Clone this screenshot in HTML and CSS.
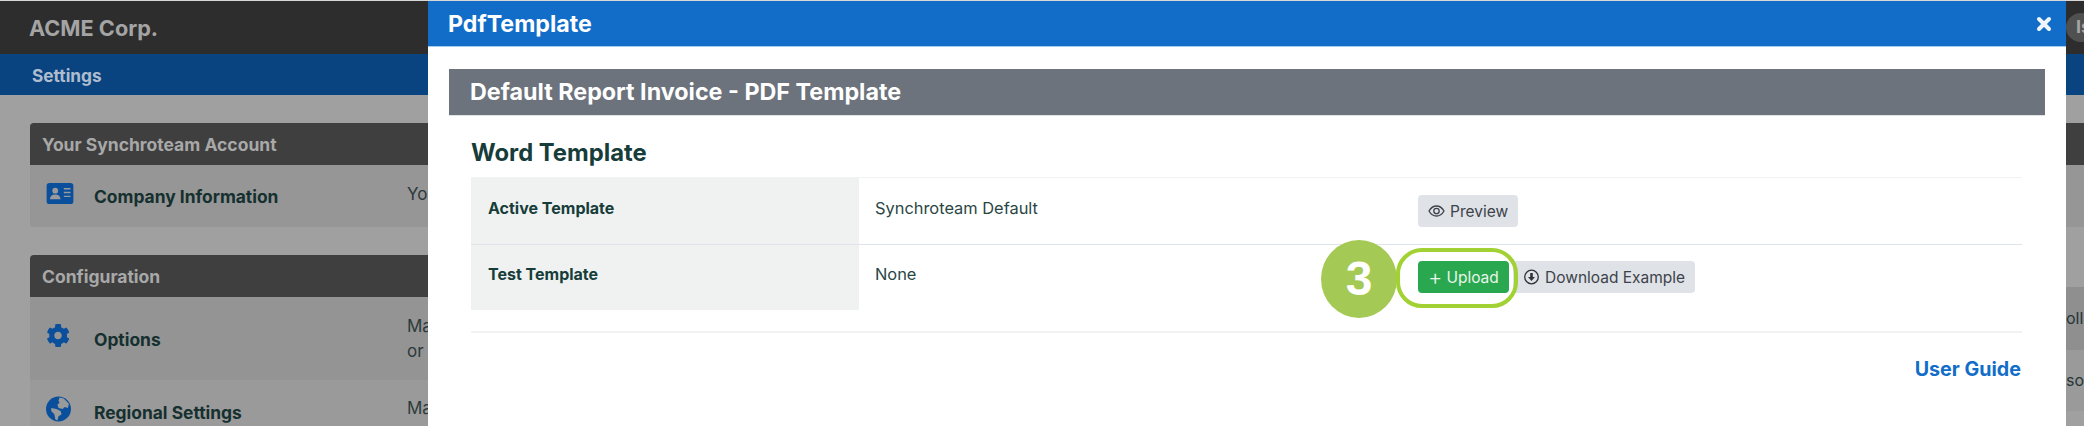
FILE: index.html
```html
<!DOCTYPE html>
<html lang="en">
<head>
<meta charset="utf-8">
<title>PdfTemplate</title>
<link rel="stylesheet" href="styles.css">
</head>
<body>
<div class="page">
  <header class="topbar">
    <span class="brand">ACME Corp.</span>
    <span class="avatar">Is</span>
  </header>
  <div class="subbar">Settings</div>
  <main class="content">
    <section class="card">
      <h2 class="card-head">Your Synchroteam Account</h2>
      <div class="row row-a">
        <svg class="row-icon" viewBox="0 0 28 22"><rect width="28" height="22" rx="3" fill="#0a4f9c"/><circle cx="9" cy="8" r="3" fill="#9a9a9a"/><path d="M3.500 17c0-3 2-5 5.500-5s5.500 2 5.500 5z" fill="#9a9a9a"/><path d="M18 6h7M18 10h7M18 14h7" stroke="#9a9a9a" stroke-width="1.500"/></svg>
        <span class="row-title">Company Information</span>
        <span class="row-desc">You</span>
      </div>
    </section>
    <div class="lower">
      <section class="card card-second">
        <h2 class="card-head">Configuration</h2>
        <div class="row row-b">
          <svg class="row-icon gear" viewBox="0 0 512 512"><path fill="#0a4f9c" d="M487 316l-42-24c4-23 4-47 0-70l42-24c5-3 7-9 6-14-11-35-30-67-54-93-4-4-10-5-15-2l-42 24c-18-15-38-27-60-35V30c0-6-4-11-9-12-36-8-73-8-108 0-6 1-10 6-10 12v48c-22 8-42 20-60 35L93 89c-5-3-11-2-15 2-24 26-43 58-54 93-2 5 1 11 6 14l42 24c-4 23-4 47 0 70l-42 24c-5 3-7 9-6 14 11 35 30 67 54 93 4 4 10 5 15 2l42-24c18 15 38 27 60 35v48c0 6 4 11 10 12 36 8 73 8 108 0 5-1 9-6 9-12v-48c22-8 42-20 60-35l42 24c5 3 11 2 15-2 24-26 43-58 54-93 1-5-1-11-6-14zM256 336c-44 0-80-36-80-80s36-80 80-80 80 36 80 80-36 80-80 80z"/></svg>
          <span class="row-title">Options</span>
          <span class="row-desc">Ma<br>or</span>
        </div>
        <div class="row row-c">
          <svg class="row-icon globe" viewBox="0 0 24 24"><circle cx="12" cy="12" r="12" fill="#0a4f9c"/><path fill="#9a9a9a" d="M13 1l4 1 5 5-1 4-3-1-2 2-4-1-1-3 2-2-1-2zM5 11l5 1 4 2 1 3-3 2-1 4-2-1-1-5-3-3z"/></svg>
          <span class="row-title">Regional Settings</span>
          <span class="row-desc">Ma</span>
        </div>
      </section>
      <aside class="side">
        <div class="side-row side-dark">oll</div>
        <div class="side-row side-light">so</div>
      </aside>
    </div>
  </main>
</div>

<div class="modal">
  <div class="modal-head">
    <span class="modal-title">PdfTemplate</span>
    <svg class="modal-close" viewBox="0 0 16 16"><path d="M3 3l10 10M13 3L3 13" stroke="#eef5fb" stroke-width="4" stroke-linecap="round"/></svg>
  </div>
  <div class="modal-body">
    <h1 class="banner">Default Report Invoice - PDF Template</h1>
    <h2 class="section-title">Word Template</h2>
    <div class="tpl-table">
      <div class="tpl-row">
        <div class="tpl-label">Active Template</div>
        <div class="tpl-value">Synchroteam Default</div>
        <div class="tpl-actions">
          <button class="btn btn-grey">
            <svg class="btn-icon" viewBox="0 0 17 16"><path d="M1 8s2.800-5 7.500-5S16 8 16 8s-2.800 5-7.500 5S1 8 1 8z" fill="none" stroke="#3d434a" stroke-width="1.300"/><circle cx="8.500" cy="8" r="2.700" fill="none" stroke="#3d434a" stroke-width="1.300"/></svg>
            Preview
          </button>
        </div>
      </div>
      <div class="tpl-row">
        <div class="tpl-label">Test Template</div>
        <div class="tpl-value">None</div>
        <div class="tpl-actions">
          <span class="callout">3</span>
          <span class="ring">
            <button class="btn btn-green"><span class="plus">+</span> Upload</button>
          </span>
          <button class="btn btn-grey btn-dl">
            <svg class="btn-icon" viewBox="0 0 16 16"><circle cx="8" cy="8" r="6.800" fill="none" stroke="#2f353b" stroke-width="1.300"/><path d="M6.700 4h2.600v4h2.200L8 12 4.500 8h2.200z" fill="#2f353b"/></svg>
            Download Example
          </button>
        </div>
      </div>
    </div>
    <div class="guide-row"><a class="guide" href="#">User Guide</a></div>
  </div>
</div>
</body>
</html>
```

FILE: styles.css
```css
*, *::after { box-sizing: border-box; }
html, body { margin: 0; height: 100%; }
body {
  position: relative;
  height: 426px;
  overflow: hidden;
  background: #a0a0a0;
  font-family: Inter, "Liberation Sans", sans-serif;
}
button { font-family: inherit; }

.page { padding-top: 1px; background: #d8d8d8; height: 426px; overflow: hidden; }
.topbar {
  height: 53px;
  background: #2d2d2d;
  padding-left: 29px;
  display: flex;
  align-items: center;
  justify-content: space-between;
}
.brand { color: #a4a4a4; font-size: 21.700px; font-weight: 700; }
.avatar {
  width: 30px;
  height: 29px;
  margin-right: -12px;
  border-radius: 50%;
  background: #505050;
  color: #a4a4a4;
  font-size: 18px;
  font-weight: 700;
  padding: 3px 0 0 10px;
}
.subbar {
  height: 41px;
  background: #0a4480;
  color: #aebdce;
  font-size: 17.300px;
  font-weight: 700;
  padding: 11px 0 0 32px;
}
.content { background: #a0a0a0; height: 331px; padding: 28px 0 0 30px; }
.card { border-radius: 4px 0 0 4px; overflow: hidden; background: #969696; }
.lower { display: flex; margin-top: 28px; }
.card-second { flex: 1; background: #9a9a9a; }
.card-head {
  margin: 0;
  height: 42px;
  background: #3f3f3f;
  color: #a8a8a8;
  font-size: 17.500px;
  font-weight: 700;
  padding: 11px 0 0 12px;
}
.row { display: flex; align-items: flex-start; }
.row-a { height: 62px; background: #969696; }
.row-b { height: 83px; background: #949494; }
.row-c { height: 60px; background: #9a9a9a; }
.row-icon { flex: none; width: 28px; height: 21px; margin: 18px 0 0 16px; }
.row-b .gear { width: 24px; height: 25px; margin: 26px 4px 0 16px; }
.row-c .globe { width: 25px; height: 26px; margin: 16px 3px 0 16px; }
.row-title { width: 313px; margin: 21px 0 0 20px; font-size: 17.400px; font-weight: 700; color: #15302f; }
.row-b .row-title { margin-top: 32px; }
.row-c .row-title { margin-top: 22px; }
.row-desc { color: #2d3a3a; font-size: 17px; line-height: 25px; margin-top: 17px; }
.row-c .row-desc { margin-top: 16px; }
.side { flex: none; width: 18px; margin-top: 32px; overflow: hidden; color: #263636; font-size: 16px; }
.side-dark { height: 63px; padding-top: 21px; background: #8f8f8f; }
.side-light { height: 61px; padding-top: 20px; background: #9a9a9a; }

.modal {
  position: absolute;
  top: 1px;
  left: 428px;
  width: 1638px;
  height: 425px;
  background: #fff;
  overflow: hidden;
}
.modal-head {
  height: 46px;
  background: #126dc8;
  border-bottom: 1px solid #a9cbeb;
  display: flex;
  align-items: center;
  justify-content: space-between;
  padding: 0 14px 0 20px;
}
.modal-title { color: #fff; font-size: 23.200px; font-weight: 700; }
.modal-close { width: 16px; height: 16px; }
.modal-body { padding: 22px 21px 0 21px; }
.banner {
  margin: 0;
  height: 47px;
  background: #6c737c;
  border-bottom: 1px solid #dfe3e6;
  color: #fff;
  font-size: 23.300px;
  font-weight: 700;
  line-height: 46px;
  padding-left: 21px;
}
.section-title {
  margin: 22px 0 0 22px;
  color: #163d3a;
  font-size: 23.800px;
  line-height: 30px;
  font-weight: 700;
}
.tpl-table {
  margin: 9px 23px 0 22px;
  border-top: 1px solid #f0f2f3;
  border-bottom: 2px solid #f0f2f3;
  padding-bottom: 21px;
}
.tpl-row { display: flex; height: 66px; }
.tpl-row + .tpl-row { border-top: 1px solid #dfe3ea; }
.tpl-label {
  width: 388px;
  background: #f0f2f1;
  color: #163d3a;
  font-size: 16px;
  font-weight: 700;
  padding: 20px 0 0 17px;
}
.tpl-value {
  width: 559px;
  color: #2a4644;
  font-size: 16.400px;
  padding: 20px 0 0 16px;
}
.tpl-row + .tpl-row .tpl-label, .tpl-row + .tpl-row .tpl-value { padding-top: 19px; }
.tpl-actions { position: relative; display: flex; align-items: flex-start; padding-top: 17px; }
.tpl-row + .tpl-row .tpl-actions { padding-top: 16px; }
.btn {
  display: inline-flex;
  align-items: center;
  gap: 5px;
  height: 32px;
  border: 0;
  border-radius: 4px;
  padding: 0 10px;
  font-size: 15.500px;
  color: #3d434a;
  white-space: nowrap;
}
.btn-grey { background: #dfe2e7; }
.btn-green { width: 91px; background: #2aa84f; color: #e8f6ec; gap: 4px; }
.btn-dl { margin-left: 4px; width: 182px; }
.btn-icon { width: 17px; height: 16px; flex: none; }
.plus { font-size: 22px; line-height: 1; font-weight: 300; }
.ring {
  display: inline-flex;
  position: relative;
}
.ring::after {
  content: "";
  position: absolute;
  z-index: 2;
  left: -22px;
  top: -13px;
  width: 122px;
  height: 60px;
  border: 4px solid #a2d134;
  border-radius: 26px;
}
.callout {
  position: absolute;
  left: -97px;
  top: -5px;
  width: 76px;
  height: 78px;
  border-radius: 50%;
  background: #a5c955;
  color: #fff;
  font-family: "Liberation Sans", sans-serif;
  font-size: 48px;
  font-weight: 700;
  line-height: 78px;
  text-align: center;
}
.guide-row { text-align: right; margin: 24px 24px 0 0; }
.guide { color: #126dc8; font-size: 19.700px; font-weight: 700; text-decoration: none; }
```
